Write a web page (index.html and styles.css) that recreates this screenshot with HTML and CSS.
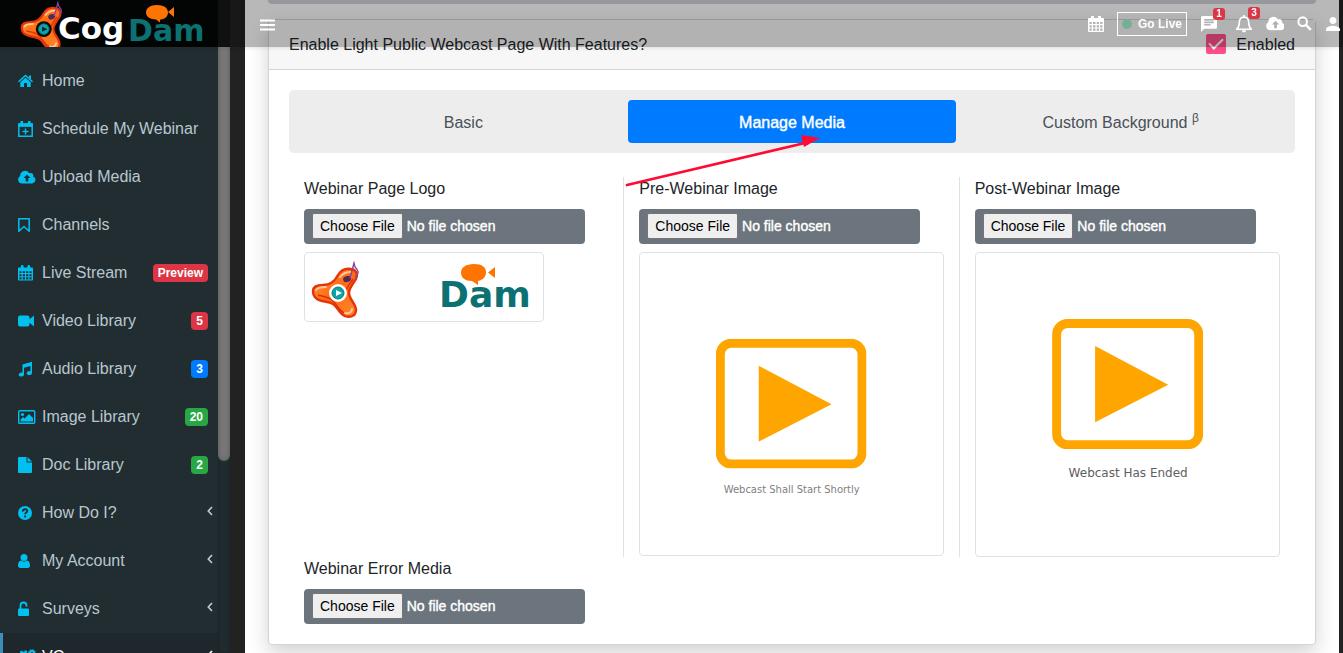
FILE: index.html
```html
<!DOCTYPE html>
<html lang="en">
<head>
<meta charset="utf-8">
<title>CogDam</title>
<link rel="stylesheet" href="styles.css">
</head>
<body>
<svg class="defs" aria-hidden="true">
  <defs>
    <linearGradient id="orange" x1="0" y1="0" x2="1" y2="1">
      <stop offset="0" stop-color="#ff9a3c"/><stop offset="0.5" stop-color="#ff6a12"/><stop offset="1" stop-color="#ff8a30"/>
    </linearGradient>
  </defs>
  <symbol id="spinner" viewBox="0 0 50 58">
    <path d="M2 30C2 25 6 24 12 24C20 24 24 20 27 14C30 9 35 7 40 8C46 9 47 14 45 18C42 23 38 27 38 32C38 38 45 43 45 49C45 55 39 57 34 55C28 53 27 46 22 43C17 40 10 41 6 38C3 36 2 33 2 30z" fill="url(#orange)" stroke="#e8330a" stroke-width="2.400"/>
    <path d="M5 29c2-3 6-3 10-3M29 16c3-4 7-5 11-5M34 52c4 1 7-1 7-4" fill="none" stroke="#ffc896" stroke-width="2" stroke-linecap="round"/>
    <path d="M7 34c6 2 11 1 16 7s6 9 10 11M42 18c-3 5-7 8-7 14" fill="none" stroke="#d93208" stroke-width="1.500"/>
    <circle cx="27" cy="32" r="9" class="hub"/>
    <circle cx="27" cy="32" r="6" fill="#0ea5a8" stroke="#087a80" stroke-width="1"/>
    <path d="M25 29l6 3-6 3z" class="hub-play"/>
    <ellipse cx="36" cy="18" rx="4" ry="3" fill="#4e2a5c" transform="rotate(-20 36 18)"/>
    <path d="M39 17L43 2l1 4c4 4 4 6 1 9l0 3" fill="none" stroke="#86479a" stroke-width="1.400"/>
  </symbol>
  <symbol id="calendar" viewBox="0 0 16 16">
    <path d="M1 2h2V1a1 1 0 0 1 3 0v1h4V1a1 1 0 0 1 3 0v1h2a1 1 0 0 1 1 1v12a1 1 0 0 1-1 1H1a1 1 0 0 1-1-1V3a1 1 0 0 1 1-1zM1.500 6v2h2.200V6zm3.500 0v2h2.500V6zm3.700 0v2H11V6zm3.500 0v2h2.300V6zM1.500 9.200v2.200h2.200V9.200zm3.500 0v2.200h2.500V9.200zm3.700 0v2.200H11V9.200zm3.500 0v2.200h2.300V9.200zM1.500 12.600v2.200h2.200v-2.200zm3.500 0v2.200h2.500v-2.200zm3.700 0v2.200H11v-2.200zm3.500 0v2.200h2.300v-2.200z" fill="currentColor" fill-rule="evenodd"/>
  </symbol>
  <symbol id="cloud" viewBox="0 0 18 14">
    <path d="M4 13.500A4 4 0 0 1 2.200 6 5 5 0 0 1 11.500 3.200a2.600 2.600 0 0 1 3.600 3.200A3.700 3.700 0 0 1 14.300 13.500zM9 4.500L5.500 8h2.200v3.500h2.600V8h2.200z" fill="currentColor" fill-rule="evenodd"/>
  </symbol>
  <symbol id="chevron" viewBox="0 0 6 10"><path d="M5 1L1.300 5 5 9" fill="none" stroke="currentColor" stroke-width="1.700"/></symbol>
  <symbol id="play" viewBox="0 0 151 130">
    <rect x="4.500" y="4.500" width="142" height="121" rx="11" fill="none" stroke="#ffa500" stroke-width="9"/>
    <path d="M43 27l73 38.500L43 103z" fill="#ffa500"/>
  </symbol>
</svg>

<header class="topbar">
  <a class="brand" href="#" aria-label="CogDam home">
    <svg viewBox="0 0 218 47" class="brand-art on-dark">
      <use href="#spinner" x="20" y="1" width="44" height="51"/>
      <text x="58" y="39" class="logo-text white" font-size="31">Cog</text>
      <text x="128" y="41" class="logo-text teal" font-size="30">Dam</text>
      <path d="M157 5c7 0 11 3 11 7.500s-4 7-8 7l0 3-4-3c-6 0-10-3-10-7S150 5 157 5zM168 12l6-5v10z" fill="#ff7300"/>
    </svg>
  </a>
  <button class="icon-btn menu-btn" aria-label="Toggle menu"><svg viewBox="0 0 15 12"><path d="M0 1.500h15M0 6h15M0 10.500h15" stroke="currentColor" stroke-width="2.200"/></svg></button>
  <div class="actions">
    <button class="icon-btn w16" aria-label="Calendar"><svg viewBox="0 0 16 16"><use href="#calendar"/></svg></button>
    <button class="live-btn"><span class="dot"></span>Go Live</button>
    <button class="icon-btn w22" aria-label="Messages"><svg viewBox="2 2 20 20"><path fill="currentColor" d="M20 2H4c-1.100 0-2 .9-2 2v18l4-4h14c1.100 0 2-.9 2-2V4c0-1.100-.9-2-2-2zM6 9h12v2H6V9zm8 5H6v-2h8v2zm4-6H6V6h12v2z"/></svg><span class="count">1</span></button>
    <button class="icon-btn w17" aria-label="Notifications"><svg viewBox="0 0 16 17"><path d="M8 2C4.500 2 3.500 5 3.500 7.500c0 3-.8 4.500-2.500 6h14c-1.700-1.500-2.500-3-2.500-6C12.500 5 11.500 2 8 2zM8 0v2" fill="none" stroke="currentColor" stroke-width="1.500" stroke-linejoin="round"/><path d="M6 14.500a2 2 0 0 0 4 0z" fill="currentColor"/></svg><span class="count">3</span></button>
    <button class="icon-btn w18" aria-label="Upload"><svg viewBox="0 0 17 14"><use href="#cloud" width="18" height="14"/></svg></button>
    <button class="icon-btn w16 search" aria-label="Search"><svg viewBox="2.500 2.500 18.500 18.500"><circle cx="9.500" cy="9.500" r="5.300" fill="none" stroke="currentColor" stroke-width="2.500"/><path d="M13.500 13.500l6 6" stroke="currentColor" stroke-width="3"/></svg></button>
    <button class="icon-btn w14" aria-label="Profile"><svg viewBox="4 4 16 16"><path fill="currentColor" d="M12 12c2.210 0 4-1.790 4-4s-1.790-4-4-4-4 1.790-4 4 1.790 4 4 4zm0 2c-2.670 0-8 1.340-8 4v2h16v-2c0-2.660-5.330-4-8-4z"/></svg></button>
  </div>
</header>

<div class="shell">
  <aside class="sidebar">
    <nav class="nav">
      <a class="nav-item" href="#"><svg viewBox="0 0 18 16" class="ico"><path fill="currentColor" d="M7.500 1.500L15 8.200l-1 1L7.500 3.500 1 9.200l-1-1zM11 2.500h2v3.800l-2-1.800zM7.500 4.700l5.200 4.500V14H9v-4H6v4H2.300V9.200z"/></svg><span>Home</span></a>
      <a class="nav-item" href="#"><svg viewBox="0 0 18 16" class="ico"><path d="M.8 3h13.400v12.200H.8zM.8 5h13.400" fill="none" stroke="currentColor" stroke-width="1.500"/><path d="M.5 2.500h14v3H.5zM2.500 0h2.500v4H2.500zM10 0h2.500v4H10z" fill="currentColor"/><path d="M7.500 7.500v6M4.500 10.500h6" stroke="currentColor" stroke-width="1.300"/></svg><span>Schedule My Webinar</span></a>
      <a class="nav-item" href="#"><svg viewBox="0 0 18 16" class="ico"><use href="#cloud" y="1" width="18" height="14"/></svg><span>Upload Media</span></a>
      <a class="nav-item" href="#"><svg viewBox="0 0 18 16" class="ico"><path d="M.8 1.800h10.400v12.400L6 9.500.8 14.200z" fill="none" stroke="currentColor" stroke-width="1.500" stroke-linejoin="round"/></svg><span>Channels</span></a>
      <a class="nav-item" href="#"><svg viewBox="0 0 18 16" class="ico"><use href="#calendar" width="15" height="16"/></svg><span>Live Stream</span><b class="badge red">Preview</b></a>
      <a class="nav-item" href="#"><svg viewBox="0 0 18 16" class="ico"><path fill="currentColor" d="M2.500 2.500H9a2.300 2.300 0 0 1 2.500 2.300v1.400L16 2.500v11l-4.500-3.700v1.400A2.300 2.300 0 0 1 9 13.500H2.500A2.300 2.300 0 0 1 0 11.200V4.800a2.300 2.300 0 0 1 2.500-2.300z"/></svg><span>Video Library</span><b class="badge red">5</b></a>
      <a class="nav-item" href="#"><svg viewBox="0 0 18 16" class="ico"><path fill="currentColor" d="M4.500 3.500L14 .8V12a2.600 2 0 1 1-1.500-1.800V5L6 6.800V13.500a2.600 2 0 1 1-1.500-1.800z"/></svg><span>Audio Library</span><b class="badge blue">3</b></a>
      <a class="nav-item" href="#"><svg viewBox="0 0 18 16" class="ico"><rect x=".7" y="1.700" width="16" height="12.600" rx="1" fill="none" stroke="currentColor" stroke-width="1.400"/><circle cx="4.500" cy="5.500" r="1.600" fill="currentColor"/><path d="M2.500 12.500V10.500L5 8l1.500 1.500L11 5l4 4v3.500z" fill="currentColor"/></svg><span>Image Library</span><b class="badge green">20</b></a>
      <a class="nav-item" href="#"><svg viewBox="0 0 18 16" class="ico"><path fill="currentColor" d="M1 0h7.500v5.500H14V15a1 1 0 0 1-1 1H1a1 1 0 0 1-1-1V1a1 1 0 0 1 1-1zm8.500 0L14 4.500H9.500z"/></svg><span>Doc Library</span><b class="badge green">2</b></a>
      <a class="nav-item" href="#"><svg viewBox="0 0 18 16" class="ico"><circle cx="7" cy="8" r="7" fill="currentColor"/><path d="M4.800 6.500C4.800 3.500 9.300 3.500 9.300 6c0 1.700-2.200 1.500-2.200 3.300M7.100 10.500v2" fill="none" stroke="#222d32" stroke-width="1.900"/></svg><span>How Do I?</span><svg class="chev"><use href="#chevron"/></svg></a>
      <a class="nav-item" href="#"><svg viewBox="0 0 18 16" class="ico"><circle cx="6" cy="4.500" r="3.500" fill="currentColor"/><path d="M3 7.500c2 1.500 4 1.500 6 0 2.500.5 3 3 3 5 0 1.500-1 2.500-2 2.500H2c-1 0-2-1-2-2.500 0-2 .5-4.500 3-5z" fill="currentColor"/></svg><span>My Account</span><svg class="chev"><use href="#chevron"/></svg></a>
      <a class="nav-item" href="#"><svg viewBox="0 0 18 16" class="ico"><path d="M2.500 8V4.500a3 3 0 0 1 6 0V5.500" fill="none" stroke="currentColor" stroke-width="1.800"/><rect y="7.500" width="11" height="7.500" rx="1" fill="currentColor"/></svg><span>Surveys</span><svg class="chev"><use href="#chevron"/></svg></a>
      <a class="nav-item current" href="#"><svg viewBox="0 0 18 16" class="ico"><circle cx="6" cy="8" r="4" fill="none" stroke="currentColor" stroke-width="3"/><circle cx="6" cy="8" r="5.800" fill="none" stroke="currentColor" stroke-width="2" stroke-dasharray="2.300 2.250"/><circle cx="14" cy="4" r="2" fill="none" stroke="currentColor" stroke-width="2"/><circle cx="14" cy="4" r="3.200" fill="none" stroke="currentColor" stroke-width="1.300" stroke-dasharray="1.500 1"/><circle cx="14" cy="12" r="2" fill="none" stroke="currentColor" stroke-width="2"/></svg><span>VC</span><svg class="chev"><use href="#chevron"/></svg></a>
    </nav>
    <div class="track"><div class="thumb"></div></div>
  </aside>

  <main class="main">
    <div class="prev-card"></div>
    <section class="card">
      <div class="card-head">
        <span>Enable Light Public Webcast Page With Features?</span>
        <label class="enabled"><input type="checkbox" checked>Enabled</label>
      </div>
      <div class="card-body">
        <div class="tabs">
          <button class="tab">Basic</button>
          <button class="tab active">Manage Media</button>
          <button class="tab"><span>Custom Background <sup>β</sup></span></button>
          <svg class="arrow" viewBox="0 0 196 54" aria-hidden="true"><path d="M2 50L180 8" stroke="#ff0a33" stroke-width="2.800" stroke-linecap="round"/><path d="M176 0l19 3-16 9z" fill="#ff0a33"/></svg>
        </div>
        <div class="grid">
          <div class="col">
            <label for="logo">Webinar Page Logo</label>
            <input id="logo" type="file">
            <div class="thumbnail small">
              <svg viewBox="0 0 238 68" class="on-light">
                <use href="#spinner" x="6" y="8" width="50" height="58"/>
                <text x="134" y="54" class="logo-text teal" font-size="36">Dam</text>
                <path d="M169 11c8 0 12 3 12 8.500s-5 8-8 8.500l0 4-6-4c-7 0-11-3.500-11-8.500S161 11 169 11zM183 19.500l7-5.500v11z" fill="#ff7300"/>
              </svg>
            </div>
          </div>
          <div class="col">
            <label for="pre">Pre-Webinar Image</label>
            <input id="pre" type="file">
            <div class="thumbnail">
              <svg viewBox="0 0 303 303"><use href="#play" x="76" y="86" width="151" height="130"/><text x="152" y="241" class="caption" font-size="10">Webcast Shall Start Shortly</text></svg>
            </div>
          </div>
          <div class="col">
            <label for="post">Post-Webinar Image</label>
            <input id="post" type="file">
            <div class="thumbnail">
              <svg viewBox="0 0 303 303"><use href="#play" x="76" y="66" width="151" height="130"/><text x="152" y="224" class="caption dark" font-size="12">Webcast Has Ended</text></svg>
            </div>
          </div>
          <div class="col">
            <label for="error">Webinar Error Media</label>
            <input id="error" type="file">
          </div>
        </div>
      </div>
    </section>
  </main>
</div>
</body>
</html>
```

FILE: styles.css
```css
* { box-sizing: border-box; }
body {
  margin: 0;
  background: #222;
  color: #212529;
  font: 16px/24px "Liberation Sans", Arial, sans-serif;
  overflow: hidden;
}
button { font: inherit; color: inherit; background: none; border: 0; padding: 0; }
.defs { position: absolute; width: 0; height: 0; }

/* top bar, translucent over the scrolled page */
.topbar {
  position: fixed;
  top: 0;
  left: 0;
  right: 0;
  z-index: 2;
  height: 47px;
  display: flex;
  align-items: center;
  padding-right: 3px;
  background: rgba(0, 0, 0, .28);
  box-shadow: 0 1px 4px rgba(0, 0, 0, .1);
  color: #fff;
}
.brand {
  width: 230px;
  height: 47px;
  border-right: 12px solid #101010;
  background: #030505;
  overflow: hidden;
}
.brand-art { display: block; width: 218px; height: 47px; }
.logo-text { font-family: "DejaVu Sans", sans-serif; font-weight: 700; }
.white { fill: #fff; }
.teal { fill: #0b7172; }
.on-dark { --hub: #120c08; --hub-play: #05282c; }
.on-light { --hub: #fff; --hub-play: #fff; }
.hub { fill: var(--hub); }
.hub-play { fill: var(--hub-play); }
.icon-btn { position: relative; display: flex; align-items: center; }
.icon-btn svg { display: block; width: 100%; max-height: 18px; }
.menu-btn { width: 15px; margin: 3px 0 0 30px; }
.actions { margin-left: auto; display: flex; align-items: center; gap: 13px; }
.w14 { width: 14px; }
.w16 { width: 16px; }
.w17 { width: 18px; }
.w18 { width: 18px; }
.w22 { width: 22px; }
.w22 svg { width: 18px; height: 16px; }
.search svg { width: 15px; }
.live-btn {
  width: 70px;
  height: 24px;
  display: flex;
  align-items: center;
  justify-content: center;
  gap: 6px;
  border: 1px solid #fff;
  font-size: 12px;
  font-weight: 700;
}
.dot { width: 10px; height: 10px; border-radius: 50%; background: #74b095; }
.count {
  position: absolute;
  top: -8px;
  left: 13px;
  width: 12px;
  border-radius: 3px;
  background: #dc3545;
  font-size: 10px;
  line-height: 12px;
  font-weight: 700;
  text-align: center;
}

.shell { display: flex; height: 100vh; padding-right: 4px; gap: 15px; }

/* sidebar */
.sidebar { flex: none; width: 230px; display: flex; background: #222d32; overflow: hidden; }
.nav { flex: 1; padding-top: 57px; }
.nav-item {
  display: flex;
  align-items: center;
  height: 48px;
  padding: 0 10px 0 18px;
  color: #b8c7ce;
  text-decoration: none;
}
.ico { flex: none; width: 18px; height: 16px; margin-right: 6px; color: #00c0ef; }
.badge {
  margin-left: auto;
  padding: 0 5px;
  border-radius: 4px;
  color: #fff;
  font-size: 12px;
  line-height: 18px;
}
.red { background: #dc3545; }
.blue { background: #007bff; }
.green { background: #28a745; }
.chev { width: 6px; height: 10px; margin: 0 -5px 5px auto; }
.current { padding-left: 15px; border-left: 3px solid #3c8dbc; background: #1e282c; color: #fff; }
.track { width: 12px; background: #202b30; box-shadow: inset 0 0 3px rgba(0, 0, 0, .3); }
.thumb { height: 70.6%; border-radius: 6px; background: #777; box-shadow: inset 0 0 4px rgba(0, 0, 0, .3); }

/* page */
.main { flex: 1; min-width: 0; padding: 0 23px; background: #fff; overflow: hidden; }
.prev-card { height: 4px; border-radius: 0 0 4px 4px; background: #d2d2dc; }
.card {
  margin-top: 15px;
  border: 1px solid #d4d4d4;
  border-radius: 4px;
  background: #fff;
  box-shadow: 0 8px 20px rgba(0, 0, 0, .18);
}
.card-head {
  display: flex;
  justify-content: space-between;
  padding: 13px 20px 12px;
  border-bottom: 1px solid #d4d4d4;
  background: #f7f7f7;
}
.enabled { display: flex; align-items: center; gap: 10px; }
.enabled input {
  appearance: none;
  width: 20px;
  height: 20px;
  margin: 0 0 2px;
  border-radius: 2px;
  background: #ff4f8b;
  display: grid;
  place-items: center;
}
.enabled input::before {
  content: "";
  width: 6px;
  height: 12px;
  margin-bottom: 4px;
  border: solid #fff;
  border-width: 0 2px 2px 0;
  transform: rotate(45deg);
}
.card-body { padding: 20px; }

.tabs {
  position: relative;
  display: grid;
  grid-template-columns: repeat(3, 1fr);
  padding: 10px;
  border-radius: 5px;
  background: #ededed;
}
.tab { height: 43px; padding-top: 2px; border-radius: 4px; color: #495057; }
.tab.active { background: #007bff; color: #fff; -webkit-text-stroke: 0.4px #fff; }
.tab sup { font-size: 12px; line-height: 0; }
.arrow { position: absolute; left: 33.4%; top: 45px; width: 196px; height: 54px; }

.grid { display: grid; grid-template-columns: repeat(3, 1fr); margin-top: 24px; }
.col { padding: 0 15px; }
.col:nth-child(-n+2) { border-right: 1px solid #dee2e6; }
.col label { display: block; margin-bottom: 8px; }
.col input {
  display: block;
  width: 281px;
  max-width: 100%;
  height: 35px;
  padding: 4px 8px;
  border-radius: 4px;
  background: #6c757d;
  color: #fff;
  font: 14px/24px "Liberation Sans", Arial, sans-serif;
  -webkit-text-stroke: 0.4px #fff;
}
.col input::file-selector-button {
  height: 26px;
  margin: 0 4px 0 0;
  padding: 0 7px;
  border: 1px solid #767676;
  border-radius: 2px;
  background: #efefef;
  color: #000;
  font: inherit;
  -webkit-text-stroke: 0;
}
.thumbnail { margin-top: 8px; border: 1px solid #dee2e6; border-radius: 4px; overflow: hidden; }
.thumbnail svg { display: block; width: 100%; }
.small { width: 240px; max-width: 100%; }
.caption { font-family: "DejaVu Sans", Verdana, sans-serif; fill: #808080; text-anchor: middle; }
.caption.dark { fill: #606060; }
```
